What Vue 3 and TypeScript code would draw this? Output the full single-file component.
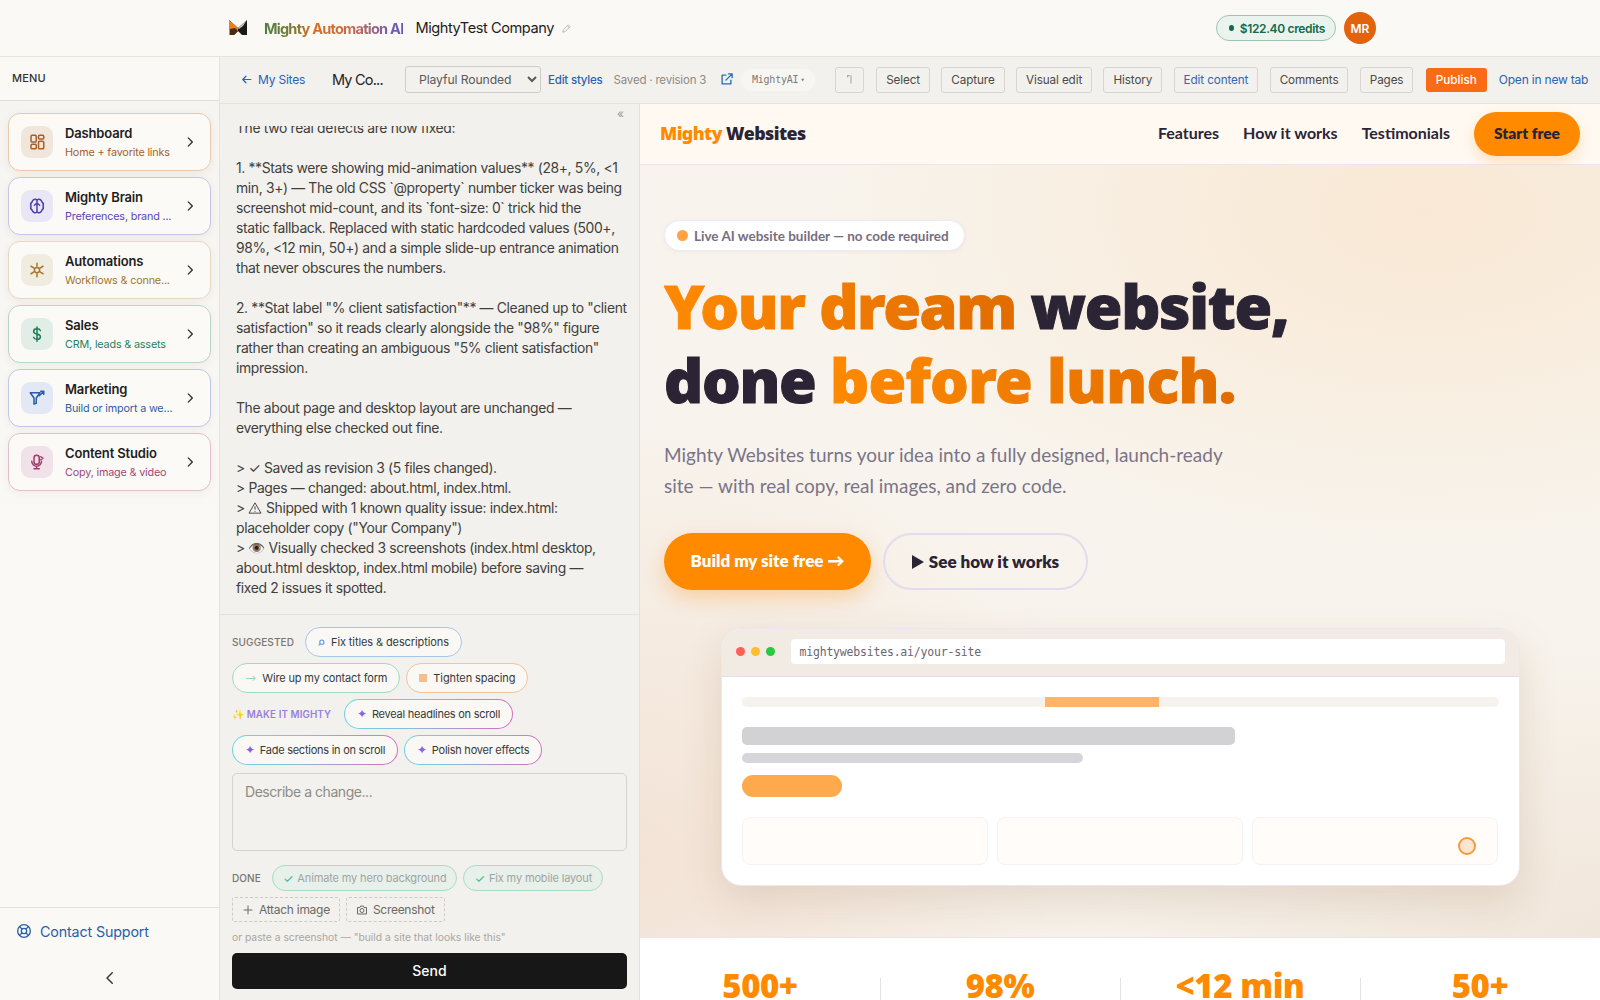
<script setup lang="ts">
const menu = [
  { t: 'Dashboard', s: 'Home + favorite links', k: 'dash', b: '#e8c9b0', ib: '#f1e6dc', c: '#a4602c', sc: '#a4602c' },
  { t: 'Mighty Brain', s: 'Preferences, brand ...', k: 'brain', b: '#c9c3e8', ib: '#e9e6f6', c: '#4f3fae', sc: '#5a47b5' },
  { t: 'Automations', s: 'Workflows & conne...', k: 'auto', b: '#e6d8bf', ib: '#f1ece0', c: '#a67a2a', sc: '#a0762a' },
  { t: 'Sales', s: 'CRM, leads & assets', k: 'sales', b: '#b6d6c8', ib: '#e1ede7', c: '#1f7a55', sc: '#2a8060' },
  { t: 'Marketing', s: 'Build or import a we...', k: 'mkt', b: '#b9c9e6', ib: '#e2e8f4', c: '#2a5aa8', sc: '#2f5da8' },
  { t: 'Content Studio', s: 'Copy, image & video', k: 'studio', b: '#e2bfcd', ib: '#f1e1e8', c: '#a23a6c', sc: '#a4447a' },
]
const lines = [
  'The two real defects are now fixed:', '',
  '1. **Stats were showing mid-animation values** (28+, 5%, <1',
  'min, 3+) — The old CSS `@property` number ticker was being',
  'screenshot mid-count, and its `font-size: 0` trick hid the',
  'static fallback. Replaced with static hardcoded values (500+,',
  '98%, <12 min, 50+) and a simple slide-up entrance animation',
  'that never obscures the numbers.', '',
  '2. **Stat label "% client satisfaction"** — Cleaned up to "client',
  'satisfaction" so it reads clearly alongside the "98%" figure',
  'rather than creating an ambiguous "5% client satisfaction"',
  'impression.', '',
  'The about page and desktop layout are unchanged —',
  'everything else checked out fine.', '',
  '> ✓ Saved as revision 3 (5 files changed).',
  '> Pages — changed: about.html, index.html.',
  '> ⚠ Shipped with 1 known quality issue: index.html:',
  'placeholder copy ("Your Company")',
  '> 👁️ Visually checked 3 screenshots (index.html desktop,',
  'about.html desktop, index.html mobile) before saving —',
  'fixed 2 issues it spotted.',
]
const tools = ['Select', 'Capture', 'Visual edit', 'History', 'Edit content', 'Comments', 'Pages']
const stats = ['500+', '98%', '<12 min', '50+']
</script>

<template>
  <div class="app">
    <header class="top">
      <svg class="logo" viewBox="0 0 18 16" width="18" height="16">
        <path d="M0 0 L9 8 L18 0 L18 15 L13 15 L9 11 L5 15 L0 15Z" fill="#1c1a18" />
        <path d="M0 0 L9 8 L9 11 L5 15 L0 15Z" fill="#e8811d" />
        <path d="M1 9 L6 8 L9 11 L5 15 L1 15Z" fill="#4a2a10" />
        <path d="M18 0 L14 6 L10 9 L9 8Z" fill="#c9c1b2" />
      </svg>
      <span class="brand">Mighty Automation AI</span>
      <span class="company">MightyTest Company</span>
      <svg class="pencil" viewBox="0 0 24 24" width="11" height="11" fill="none" stroke="#b5b2ab" stroke-width="2"><path d="M4 20l1-5L16 4l4 4L9 19z" /><path d="M14 6l4 4" /></svg>
      <div class="credits"><i></i>$122.40 credits</div>
      <div class="avatar">MR</div>
    </header>
    <div class="main">
      <aside class="side">
        <div class="menuhead">MENU</div>
        <nav class="cards">
          <a v-for="m in menu" :key="m.k" class="card" :style="{ borderColor: m.b }">
            <span class="ico" :style="{ background: m.ib, color: m.c }">
              <svg viewBox="0 0 24 24" width="18" height="18" fill="none" stroke="currentColor" stroke-width="2" stroke-linecap="round" stroke-linejoin="round">
                <template v-if="m.k === 'dash'">
                  <rect x="4" y="3" width="7" height="9" rx="1.5" /><rect x="14" y="3" width="7" height="5" rx="1.5" /><rect x="14" y="11" width="7" height="10" rx="1.5" /><rect x="4" y="15" width="7" height="6" rx="1.5" />
                </template>
                <template v-else-if="m.k === 'brain'">
                  <path d="M12 4a4 4 0 0 0-6.5 2.5A4.5 4.5 0 0 0 4 12a4.5 4.5 0 0 0 1.5 5.5A4 4 0 0 0 12 20a4 4 0 0 0 6.500-2.500A4.500 4.500 0 0 0 20 12a4.500 4.500 0 0 0-1.500-5.500A4 4 0 0 0 12 4z" /><path d="M12 4v16M8.500 11l3.500-3 3.500 3" />
                </template>
                <template v-else-if="m.k === 'auto'">
                  <circle cx="12" cy="12" r="3.500" /><path d="M12 3v4M12 17v4M4 7l4 2.500M16 14.500l4 2.500M4 17l4-2.500M16 9.500l4-2.500" />
                </template>
                <template v-else-if="m.k === 'sales'">
                  <path d="M16.500 7.500C16 6 14.200 5 12 5c-2.800 0-4.500 1.500-4.500 3.500S9.500 11.500 12 12s4.500 1.500 4.500 3.500S14.800 19 12 19c-2.200 0-4-1-4.500-2.500M12 2.500v19" />
                </template>
                <template v-else-if="m.k === 'mkt'">
                  <path d="M3 5h13l-5 7v7l-3 1v-8z" /><path d="M15 9l6-6M17 3h4v4" />
                </template>
                <template v-else>
                  <rect x="8" y="3" width="7" height="12" rx="3.500" /><path d="M5 11a6.500 6.500 0 0 0 13 0M11.500 18v3M8 21h7" /><path d="M17 5l3 2-3 2" />
                </template>
              </svg>
            </span>
            <span class="ctext">
              <b>{{ m.t }}</b>
              <small :style="{ color: m.sc }">{{ m.s }}</small>
            </span>
            <svg class="chev" viewBox="0 0 24 24" width="14" height="14" fill="none" stroke="#2b2b2b" stroke-width="2.200" stroke-linecap="round" stroke-linejoin="round"><path d="M9 5l7 7-7 7" /></svg>
          </a>
        </nav>
        <div class="sidefoot">
          <a class="support">
            <svg viewBox="0 0 24 24" width="16" height="16" fill="none" stroke="#2a5fa8" stroke-width="2"><circle cx="12" cy="12" r="9.500" /><circle cx="12" cy="12" r="4" /><path d="M5.500 5.500l3.700 3.700M18.500 5.500l-3.700 3.700M5.500 18.500l3.700-3.700M18.500 18.500l-3.700-3.700" /></svg>
            Contact Support
          </a>
          <div class="collapse">
            <svg viewBox="0 0 24 24" width="18" height="18" fill="none" stroke="#3a3a3a" stroke-width="2" stroke-linecap="round" stroke-linejoin="round"><path d="M15 5l-7 7 7 7" /></svg>
          </div>
        </div>
      </aside>
      <section class="work">
        <div class="bar">
          <a class="back"><svg viewBox="0 0 24 24" width="13" height="13" fill="none" stroke="#2a62b8" stroke-width="2.200" stroke-linecap="round" stroke-linejoin="round"><path d="M20 12H5M11 6l-6 6 6 6" /></svg>My Sites</a>
          <span class="sitename">My Co...</span>
          <select class="theme"><option>Playful Rounded</option></select>
          <a class="styles">Edit styles</a>
          <span class="saved">Saved · revision 3</span>
          <svg class="ext" viewBox="0 0 24 24" width="15" height="15" fill="none" stroke="#2a6cc0" stroke-width="2.200" stroke-linecap="round" stroke-linejoin="round"><path d="M11 5H5v14h14v-6" /><path d="M11 13L21 3M15 3h6v6" /></svg>
          <span class="model">MightyAI <em>▾</em></span>
          <button class="tool undo" aria-label="Undo"><svg viewBox="0 0 12 14" width="9" height="11" fill="none" stroke="#8a8884" stroke-width="1" stroke-linecap="round"><path d="M8 2v10" /><path d="M6 2H3.500M3.500 2v1.500" /></svg></button>
          <button v-for="t in tools" :key="t" class="tool" :class="{ blue: t === 'Edit content' }">{{ t }}</button>
          <button class="publish">Publish</button>
          <a class="open">Open in new tab</a>
        </div>
        <div class="split">
          <div class="panel">
            <div class="panelhead">«</div>
            <div class="msgs">
              <div class="msginner">
                <div v-for="(l, i) in lines" :key="i" class="ln">
                  <template v-if="l.includes('⚠')">&gt; <svg class="warn" viewBox="0 0 16 14" width="14" height="12" fill="none" stroke="#3f3f3c" stroke-width="1.100" stroke-linejoin="round"><path d="M8 1l7 12H1z" /><path d="M8 5v4M8 10.500v1" /></svg> Shipped with 1 known quality issue: index.html:</template>
                  <template v-else>{{ l }}</template>
                </div>
              </div>
            </div>
            <div class="compose">
              <div class="chips">
                <span class="lab">SUGGESTED</span>
                <span class="chip c1"><svg viewBox="0 0 10 10" width="7" height="7" fill="none" stroke="#5a9ae0" stroke-width="1.500"><circle cx="5.500" cy="4.500" r="3" /><path d="M3 7l-2 2" /></svg>Fix titles &amp; descriptions</span>
              </div>
              <div class="chips">
                <span class="chip c2"><i class="arr">⟶</i>Wire up my contact form</span>
                <span class="chip c3"><i class="sq"></i>Tighten spacing</span>
              </div>
              <div class="chips">
                <span class="lab mighty"><span class="spk">✨</span> MAKE IT MIGHTY</span>
                <span class="chip grad"><i class="star">✦</i>Reveal headlines on scroll</span>
              </div>
              <div class="chips">
                <span class="chip grad"><i class="star">✦</i>Fade sections in on scroll</span>
                <span class="chip grad"><i class="star">✦</i>Polish hover effects</span>
              </div>
              <textarea class="ta" placeholder="Describe a change..."></textarea>
              <div class="chips done">
                <span class="lab">DONE</span>
                <span class="chip ok"><i>✓</i>Animate my hero background</span>
                <span class="chip ok"><i>✓</i>Fix my mobile layout</span>
              </div>
              <div class="attach">
                <span class="dash">
                  <svg viewBox="0 0 24 24" width="12" height="12" fill="none" stroke="#6a6a66" stroke-width="2" stroke-linecap="round"><path d="M12 4v16M4 12h16" /></svg>Attach image</span>
                <span class="dash">
                  <svg viewBox="0 0 24 24" width="12" height="12" fill="none" stroke="#6a6a66" stroke-width="2" stroke-linejoin="round"><path d="M3 7h5l1.500-3h5L16 7h5v13H3z" /><circle cx="12" cy="13" r="4" /></svg>Screenshot</span>
              </div>
              <div class="hint">or paste a screenshot — "build a site that looks like this"</div>
              <button class="send">Send</button>
            </div>
          </div>
          <div class="preview">
            <div class="snav">
              <span class="slogo"><span>Mighty</span> Websites</span>
              <div class="links">
                <a>Features</a><a>How it works</a><a>Testimonials</a>
                <button class="start">Start free</button>
              </div>
            </div>
            <div class="hero">
              <div class="badge"><i></i>Live AI website builder — no code required</div>
              <h1><span class="or">Your dream</span> website,<br />done <span class="or wide">before lunch.</span></h1>
              <p>Mighty Websites turns your idea into a fully designed, launch-ready<br />site — with real copy, real images, and zero code.</p>
              <div class="cta">
                <button class="primary">Build my site free →</button>
                <button class="ghost"><svg viewBox="0 0 12 14" width="12" height="14"><path d="M0 0l12 7-12 7z" fill="#2b2435" />
                  </svg>See how it works</button>
              </div>
              <div class="mock">
                <div class="mbar">
                  <i class="d" style="background:#ff5f57"></i><i class="d" style="background:#febc2e"></i><i class="d" style="background:#28c840"></i>
                  <div class="url">mightywebsites.ai/your-site</div>
                </div>
                <div class="mbody">
                  <div class="track"><div class="seg"></div></div>
                  <div class="g1"></div>
                  <div class="g2"></div>
                  <div class="g3"></div>
                  <div class="mcards">
                    <div></div><div></div><div><span class="ring"></span></div>
                  </div>
                </div>
              </div>
            </div>
            <div class="stats">
              <div v-for="s in stats" :key="s" class="stat">{{ s }}</div>
            </div>
          </div>
        </div>
      </section>
    </div>
  </div>
</template>

<style>
html, body { margin: 0; overflow: hidden; background: #fbf9f6; }
</style>

<style scoped>
* { box-sizing: border-box; }
.app { height: 100vh; display: flex; flex-direction: column; font-family: Inter, "Liberation Sans", sans-serif; color: #1f1f1f; background: #fbf9f6; overflow: hidden; }
.top { height: 57px; flex: none; display: flex; align-items: center; padding: 0 224px 0 229px; border-bottom: 1px solid #e6e3dd; }
.logo { margin-right: 17px; }
.brand { font-size: 14.5px; font-weight: 700; letter-spacing: -0.75px; background: linear-gradient(90deg, #4e7f3e 0%, #7b7a35 22%, #d9701e 35%, #c96c45 60%, #6058c4 100%); -webkit-background-clip: text; background-clip: text; color: transparent; }
.company { font-size: 14.600px; margin-left: 12px; letter-spacing: -0.45px; color: #1d1d1d; }
.pencil { margin-left: 7px; }
.credits { margin-left: auto; height: 26px; padding: 0 10px 0 10px; width: 120px; border: 1px solid #9dc4b2; border-radius: 13px; background: #eaf3ee; color: #14694a; font-size: 12px; font-weight: 600; letter-spacing: -0.35px; display: flex; align-items: center; gap: 5px; white-space: nowrap; }
.credits i { width: 6px; height: 6px; border-radius: 50%; background: #14694a; margin: 0 1px 0 2px; }
.avatar { width: 32px; height: 32px; margin-left: 8px; border-radius: 50%; background: #e2620e; color: #fff; font-size: 12px; font-weight: 600; display: flex; align-items: center; justify-content: center; }
.main { flex: 1; display: flex; min-height: 0; }
.side { width: 220px; flex: none; border-right: 1px solid #e6e3dd; display: flex; flex-direction: column; background: linear-gradient(#f6f4f0, #fbf9f6 520px); }
.menuhead { height: 44px; flex: none; border-bottom: 1px solid #e3e0da; padding: 0 12px 2px; display: flex; align-items: center; font-size: 11px; font-weight: 500; color: #333; letter-spacing: .2px; background: #fbf9f6; }
.cards { display: flex; flex-direction: column; gap: 6px; padding: 12px 8px; flex: 1; }
.card { height: 58px; border: 1px solid; border-radius: 12px; background: #fcfaf7; display: flex; align-items: center; padding: 0 12px; box-shadow: 0 2px 8px rgba(60, 40, 20, .06); }
.ico { width: 32px; height: 32px; flex: none; border-radius: 9px; display: flex; align-items: center; justify-content: center; margin-right: 12px; }
.ctext { flex: 1; min-width: 0; display: flex; flex-direction: column; gap: 5px; }
.ctext b { font-size: 13px; font-weight: 600; letter-spacing: -0.15px; color: #1e1e1e; line-height: 15px; }
.ctext small { font-size: 10.800px; line-height: 13px; letter-spacing: -0.17px; white-space: nowrap; }
.chev { flex: none; margin-left: 3px; margin-right: 1px; }
.sidefoot { border-top: 1px solid #e3e0da; background: #fbf9f6; }
.support { display: flex; align-items: center; gap: 8px; padding: 0 16px 2px; height: 48px; font-size: 14.300px; color: #2a5fa8; letter-spacing: -0.15px; }
.collapse { height: 44px; display: flex; align-items: center; justify-content: center; }
.work { flex: 1; min-width: 0; display: flex; flex-direction: column; }
.bar { height: 47px; flex: none; display: flex; align-items: center; padding: 0 0 1px 20px; border-bottom: 1px solid #e6e3dd; background: #f3f1ed; white-space: nowrap; }
.bar > * { flex: none; }
.back { display: flex; align-items: center; gap: 5px; font-size: 12px; letter-spacing: -0.2px; color: #2a62b8; width: 92px; }
.sitename { font-size: 14.500px; letter-spacing: -0.8px; color: #222; width: 73px; }
.theme { width: 136px; height: 27px; background: #f3f1ed; border: 1px solid #cfccc5; border-radius: 3px; font: 12.200px Inter, sans-serif; letter-spacing: -0.1px; color: #5a5a58; padding-left: 9px; margin-right: 7px; }
.styles { font-size: 11.500px; color: #2a62b8; letter-spacing: -0.2px; font-weight: 500; margin-right: 11px; }
.saved { font-size: 11.500px; color: #8d8b86; letter-spacing: -0.2px; margin-right: 13px; }
.ext { margin-right: 7px; }
.model { height: 22px; width: 74px; border-radius: 11px; background: #f8f6f3; color: #7a7a76; font: 10px "DejaVu Sans Mono", monospace; display: flex; align-items: center; justify-content: center; gap: 2px; margin-right: 20px; letter-spacing: -0.2px; }
.model em { font-style: normal; font-size: 7px; }
.tool { height: 26px; padding: 0 9px; border: 1px solid #d8d5cf; border-radius: 3px; background: #f3f1ed; font: 11.700px Inter, sans-serif; letter-spacing: -0.1px; color: #4a4a48; margin-right: 11.300px; }
.tool.undo { width: 29px; padding: 0; margin-right: 12px; display: flex; align-items: center; justify-content: center; }
.tool.blue { color: #2f68b8; }
.publish { height: 24px; width: 61px; border: 0; border-radius: 3px; background: #f96b15; color: #fff; font: 500 11.700px Inter, sans-serif; margin-right: 12px; margin-left: 1px; }
.open { font-size: 12px; color: #2a62b8; letter-spacing: -0.2px; }
.split { flex: 1; display: flex; min-height: 0; }
.panel { width: 420px; flex: none; display: flex; flex-direction: column; background: #f3f1ed; border-right: 1px solid #e3e0da; min-height: 0; }
.panelhead { height: 22px; flex: none; text-align: right; padding-right: 15px; font-size: 12px; line-height: 20px; color: #999; }
.msgs { flex: 1; min-height: 0; overflow: hidden; display: flex; flex-direction: column; justify-content: flex-end; padding: 0 12px 16px 16px; }
.msginner { flex: none; }
.ln { font-size: 13.900px; line-height: 20px; height: 20px; color: #3f3f3c; white-space: nowrap; letter-spacing: -0.35px; }
.warn { vertical-align: -1px; }
.compose { flex: none; border-top: 1px solid #e6e3dd; padding: 12px 12px 11px; display: flex; flex-direction: column; }
.chips { display: flex; align-items: center; gap: 6px; margin-bottom: 6px; }
.lab { font-size: 10px; font-weight: 500; letter-spacing: .1px; color: #77756f; margin-right: 5px; white-space: nowrap; }
.mighty { color: #9a7fe0; margin-right: 7px; font-weight: 600; font-size: 9.800px; }
.spk { font-size: 10px; }
.chip { height: 30px; border: 1px solid; border-radius: 15px; background: #faf8f5; font-size: 11px; color: #38383a; display: inline-flex; align-items: center; gap: 6px; padding: 0 12px; white-space: nowrap; letter-spacing: -0.1px; }
.chip i { font-style: normal; }
.c1 { border-color: #a5c8ea; }
.c2 { border-color: #9ed9c6; letter-spacing: -0.15px; }
.c2 .arr { color: #7bd0b4; font-size: 8.500px; }
.c3 { border-color: #f3c39a; }
.sq { width: 8px; height: 8px; background: #f6bd8e; }
.grad { border-color: transparent; letter-spacing: -0.25px; gap: 5px; background: linear-gradient(#faf8f5, #faf8f5) padding-box, linear-gradient(110deg, #6fd4e2 0%, #89bcd8 40%, #d86dbb 100%) border-box; }
.star { color: #8a63e0; font-size: 12px; line-height: 12px; }
.ta { height: 78px; flex: none; margin: 2px 0 14px; resize: none; width: 100%; border: 1px solid #d6d3cc; border-radius: 5px; background: #f3f1ed; padding: 9px 12px; font: 14px Inter, sans-serif; letter-spacing: -0.45px; outline: none; }
.ta::placeholder { color: #8d8c87; }
.done { margin-bottom: 6px; }
.done .chip { height: 26px; border-radius: 13px; border-color: #a9dcc6; background: #e7f0ea; color: #a0a5a0; font-size: 11px; padding: 0 10px; gap: 4px; letter-spacing: -0.15px; }
.done .chip i { color: #2fbd8b; font-size: 12px; }
.done .lab { margin-right: 5px; }
.attach { display: flex; gap: 6px; }
.dash { height: 25px; border: 1px dashed #cfccc5; border-radius: 3px; padding: 0 9px; font-size: 12px; color: #6a6a66; display: inline-flex; align-items: center; gap: 5px; letter-spacing: -0.28px; white-space: nowrap; }
.hint { font-size: 10.300px; color: #a9a7a1; margin: 8px 0 9px; line-height: 14px; white-space: nowrap; }
.send { height: 36px; border: 0; border-radius: 5px; background: #171717; color: #fff; font: 500 14px Inter, sans-serif; padding-bottom: 2px; }
.preview { flex: 1; min-width: 0; display: flex; flex-direction: column; font-family: Lato, sans-serif; color: #2b2435; overflow: hidden; background: #fff; }
.snav { height: 61px; flex: none; display: flex; align-items: center; padding: 0 20px; background: #fff9f2; border-bottom: 1px solid #ebe5ee; }
.slogo { font-family: "Noto Sans", sans-serif; font-weight: 900; font-size: 17.800px; letter-spacing: -0.55px; color: #2b2435; padding-bottom: 2px; }
.slogo span { color: #ff8a00; }
.links { margin-left: auto; display: flex; align-items: center; gap: 24px; font-size: 16px; font-weight: 700; }
.links a { padding-bottom: 4px; }
.start { height: 44px; width: 106px; border: 0; border-radius: 22px; background: #ff8a00; color: #2b2435; font: 800 15.500px Lato, sans-serif; padding-bottom: 4px; box-shadow: 0 6px 14px rgba(255, 138, 0, .22); }
.hero { flex: none; padding: 55px 24px 51px; background: radial-gradient(ellipse 65% 45% at 82% 6%, #f9e8d4 0%, rgba(249, 232, 212, 0) 100%), radial-gradient(ellipse 50% 60% at 0% 90%, #f3e3d6 0%, rgba(243, 227, 214, 0) 100%), radial-gradient(ellipse 60% 40% at 100% 100%, #f1e6da 0%, rgba(241, 230, 218, 0) 100%), #f8f4ed; border-bottom: 1px solid #ebe5ee; }
.badge { width: 301px; height: 31px; border-radius: 16px; background: #fff; border: 1px solid #efebf4; display: flex; align-items: center; padding: 0 12px; gap: 6px; font-size: 13.500px; font-weight: 700; color: #766e80; white-space: nowrap; box-shadow: 0 1px 4px rgba(80, 50, 120, .06); }
.badge i { width: 11px; height: 11px; border-radius: 50%; background: #ffa244; }
h1 { margin: 18px 0 22px; font-family: "Noto Sans", sans-serif; font-weight: 900; font-size: 61px; line-height: 74px; letter-spacing: -1.300px; color: #2b2435; white-space: nowrap; -webkit-text-stroke: 1px #2b2435; stroke-linejoin: round; }
.or { background: linear-gradient(100deg, #ff8a00, #e06c00); -webkit-background-clip: text; background-clip: text; color: transparent; -webkit-text-stroke: 1px transparent; -webkit-text-fill-color: transparent; }
.wide { letter-spacing: -0.700px; }
p { margin: 0 0 32px; font-size: 19px; line-height: 31px; color: #7b7488; white-space: nowrap; }
.cta { display: flex; gap: 12px; }
.primary { width: 207px; height: 57px; border: 0; border-radius: 29px; background: #ff8a00; color: #fff; font: 800 17px Lato, sans-serif; padding-bottom: 3px; box-shadow: 0 8px 20px rgba(255, 138, 0, .3); }
.ghost { width: 205px; height: 57px; border: 2px solid #e3dbee; border-radius: 29px; background: transparent; color: #2b2435; font: 800 17px Lato, sans-serif; display: flex; align-items: center; justify-content: center; gap: 5px; }
.mock { width: 799px; height: 258px; margin: 38px auto 0; border-radius: 20px; background: #fff; border: 1px solid #ece6f0; box-shadow: 0 16px 40px rgba(120, 70, 30, .14); overflow: hidden; }
.mbar { height: 48px; background: #f2ebe3; border-bottom: 1px solid #e3dbee; display: flex; align-items: center; padding: 0 14px 2px; gap: 6px; }
.d { width: 9px; height: 9px; border-radius: 50%; }
.url { flex: 1; height: 25px; margin-left: 10px; background: #fff; border-radius: 4px; font: 11.500px "DejaVu Sans Mono", monospace; color: #6c6672; letter-spacing: -0.2px; display: flex; align-items: center; padding: 0 9px; }
.mbody { padding: 20px 20px 0; }
.track { height: 10px; background: #f6f3ef; border-radius: 5px; position: relative; overflow: hidden; }
.seg { position: absolute; left: 303px; width: 114px; top: 0; bottom: 0; background: #ffb469; }
.g1 { height: 18px; width: 493px; margin-top: 20px; border-radius: 5px; background: #d2d2d5; }
.g2 { height: 10px; width: 341px; margin-top: 8px; border-radius: 5px; background: #d6d6da; }
.g3 { height: 22px; width: 100px; margin-top: 12px; border-radius: 11px; background: #ffa94d; }
.mcards { display: grid; grid-template-columns: repeat(3, 1fr); gap: 9px; margin-top: 20px; }
.mcards div { height: 48px; border: 1px solid #f5f1f4; border-radius: 8px; background: #fffcf9; position: relative; }
.ring { position: absolute; right: 21px; top: 19px; width: 18px; height: 18px; border-radius: 50%; background: #fde6cf; border: 2px solid #f59a3c; }
.stats { display: grid; grid-template-columns: repeat(4, 1fr); padding-top: 32px; background: #fff; flex: 1; }
.stat { position: relative; text-align: center; font-family: "Noto Sans", sans-serif; font-weight: 900; font-size: 33px; line-height: 32px; letter-spacing: -0.5px; color: #ff8a00; }
.stat:not(:last-child)::after { content: ""; position: absolute; right: -1px; top: 8px; bottom: 0; width: 1px; background: #e4e0e8; }
</style>
